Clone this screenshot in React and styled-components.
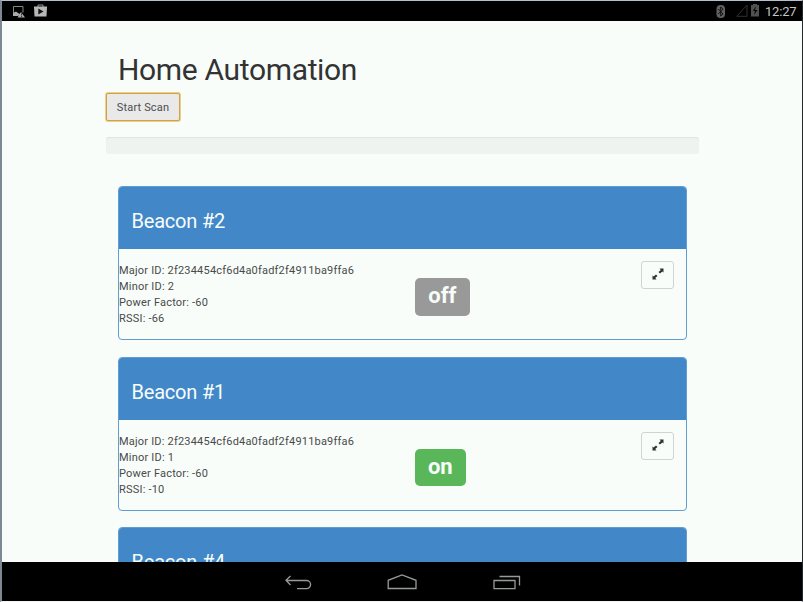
import React from "react";
import styled, { createGlobalStyle } from "styled-components";

const GlobalStyle = createGlobalStyle`
  * { box-sizing: border-box; }
  body { margin: 0; overflow: hidden; background: #f8fdfa; }
`;

const Device = styled.div`
  width: 803px;
  height: 602px;
  display: flex;
  flex-direction: column;
  overflow: hidden;
  border-style: solid;
  border-width: 1px 1px 1px 2px;
  border-color: #b4c0d2 #24282b #f4f4f4 #7e8892;
  background: #f8fdfa;
  color: #333;
  font-family: Roboto, sans-serif;
`;

const StatusBar = styled.header`
  flex: none;
  height: 20px;
  display: flex;
  justify-content: space-between;
  background: #000;
`;

const StatusGroup = styled.div`
  display: flex;
  padding: ${(p) => p.$pad};
`;

const Clock = styled.time`
  margin-left: 5px;
  width: 33px;
  font-size: 13px;
  line-height: 21px;
  letter-spacing: -0.2px;
  color: #c4c6c6;
  white-space: nowrap;
`;

const Icon = styled.svg`
  display: block;
  flex: none;
  margin-left: ${(p) => p.$gap || 0}px;
`;

const Screen = styled.main`
  flex: 1;
  min-height: 0;
  overflow: hidden;
  padding: 31px 0 0 104px;
`;

const Title = styled.h1`
  margin: 0 0 0 12px;
  font-size: 30px;
  font-weight: 400;
  line-height: 36px;
  letter-spacing: -0.34px;
`;

const ScanButton = styled.button`
  display: block;
  width: 74px;
  height: 28px;
  margin-top: 5px;
  padding: 1px 0 0;
  border: 1px solid #cfa246;
  border-radius: 2px;
  box-shadow: 0 0 0 1px #f0cd8b;
  background: #e9e9e9;
  color: #4c4c4c;
  font: 11px/25px Roboto, sans-serif;
  letter-spacing: 0.15px;
`;

const Progress = styled.div`
  width: 593px;
  height: 17px;
  margin-top: 16px;
  border-radius: 3px;
  background: #eef3f0;
  box-shadow: inset 0 1px 1px #dfe4e1;
`;

const List = styled.div`
  width: 569px;
  margin: 32px 0 0 12px;
`;

const Panel = styled.section`
  height: 154.4px;
  margin-bottom: 16.2px;
  border: 1px solid #5f9dd3;
  border-radius: 4px;
  overflow: hidden;
`;

const PanelHeading = styled.h2`
  height: 62px;
  margin: 0;
  padding: 4px 0 0 12.5px;
  background: #4288c8;
  color: #f8fdfa;
  font-size: 20px;
  font-weight: 400;
  line-height: 60px;
  letter-spacing: -0.2px;
`;

const PanelBody = styled.div`
  display: grid;
  grid-template-columns: 296px 1fr 33px;
  padding: 12px 12px 0 0;
  align-items: start;
`;

const Details = styled.div`
  font-size: 11px;
  line-height: 16.15px;
  letter-spacing: 0.2px;
  padding-top: 2px;
  color: #4a4a4a;
  white-space: nowrap;
`;

const State = styled.strong`
  justify-self: start;
  width: ${(p) => (p.$on ? 50.5 : 54.5)}px;
  height: 37.5px;
  margin-top: 17.4px;
  border-radius: 5px;
  background: ${(p) => (p.$on ? "#59b75a" : "#999")};
  color: #f8fdfa;
  font-size: 22px;
  font-weight: 700;
  line-height: 36px;
  letter-spacing: -0.1px;
  text-align: center;
`;

const ExpandButton = styled.button`
  width: 33px;
  height: 28px;
  padding: 0 0 2px;
  display: flex;
  align-items: center;
  justify-content: center;
  border: 1px solid #d0d3d1;
  border-radius: 3px;
  background: #f8fdfa;
`;

const NavBar = styled.nav`
  flex: none;
  height: 39px;
  display: flex;
  padding: 12px 0 0 282px;
  background: #000;
`;

function ScreenshotIcon() {
  return (
    <Icon width="13" height="14" viewBox="0 0 13 14">
      <path d="M1.5 10.5V2.5h9.5v6" fill="none" stroke="#858787" />
      <path d="M1 12V9l3-1.5 2 1.5 2 1-2 2zM9 8l4 5.5H5.5z" fill="#aaa" />
      <path d="M9.5 9.5v2M9.5 12v1" stroke="#333" />
    </Icon>
  );
}

function StoreIcon() {
  return (
    <Icon $gap={3} width="13" height="14" viewBox="0 0 13 14">
      <path d="M4 3V1h5v2" fill="none" stroke="#949696" />
      <path d="M0 2.5h13l-.5 10h-12z" fill="#b7b9b9" />
      <path d="M4.3 4.5v6L9.5 7.5z" fill="#111" />
    </Icon>
  );
}

function BluetoothIcon() {
  return (
    <Icon width="10" height="14" viewBox="0 0 10 14">
      <rect x=".5" y="1" width="8.5" height="13" rx="4" fill="#606262" />
      <path d="M2.3 5l4.7 5L4.7 12V3L7 5.2 2.3 10" fill="none" stroke="#111" />
    </Icon>
  );
}

function SignalIcon() {
  return (
    <Icon $gap={10} width="12" height="14" viewBox="0 0 12 14">
      <path d="M.8 12.3H11V1z" fill="none" stroke="#303232" />
    </Icon>
  );
}

function BatteryIcon() {
  return (
    <Icon $gap={2} width="10" height="14" viewBox="0 0 10 14">
      <path d="M3 0h4v1h2v11.5H1V1h2z" fill="#505252" />
      <path d="M6 2L3 7h2l-1 4 3.5-5H5z" fill="#050505" />
    </Icon>
  );
}

function ExpandIcon() {
  return (
    <Icon width="12" height="12" viewBox="0 0 12 12">
      <path
        d="M7.5 0.5h4v4L10.3 3.4 8 5.6 6.5 4.1 8.8 1.9zM4.5 11.5h-4v-4L1.7 8.6 4 6.4 5.5 7.9 3.2 10.1z"
        fill="#303332"
      />
    </Icon>
  );
}

const beacons = [
  { name: "Beacon #2", major: "2f234454cf6d4a0fadf2f4911ba9ffa6", minor: 2, power: -60, rssi: -66, on: false },
  { name: "Beacon #1", major: "2f234454cf6d4a0fadf2f4911ba9ffa6", minor: 1, power: -60, rssi: -10, on: true },
  { name: "Beacon #4" },
];

function Beacon({ data }) {
  return (
    <Panel>
      <PanelHeading>{data.name}</PanelHeading>
      {data.major && (
        <PanelBody>
          <Details>
            <div>Major ID: {data.major}</div>
            <div>Minor ID: {data.minor}</div>
            <div>Power Factor: {data.power}</div>
            <div>RSSI: {data.rssi}</div>
          </Details>
          <State $on={data.on}>{data.on ? "on" : "off"}</State>
          <ExpandButton aria-label="Expand">
            <ExpandIcon />
          </ExpandButton>
        </PanelBody>
      )}
    </Panel>
  );
}

export default function App() {
  return (
    <Device>
      <GlobalStyle />
      <StatusBar>
        <StatusGroup $pad="3px 0 0 10px">
          <ScreenshotIcon />
          <Icon width="6" height="1" />
          <StoreIcon />
        </StatusGroup>
        <StatusGroup $pad="0 4px 0 0">
          <StatusGroup $pad="3px 0 0 0">
            <BluetoothIcon />
            <SignalIcon />
            <BatteryIcon />
          </StatusGroup>
          <Clock>12:27</Clock>
        </StatusGroup>
      </StatusBar>
      <Screen>
        <Title>Home Automation</Title>
        <ScanButton>Start Scan</ScanButton>
        <Progress />
        <List>
          {beacons.map((b) => (
            <Beacon key={b.name} data={b} />
          ))}
        </List>
      </Screen>
      <NavBar>
        <Icon width="28" height="16" viewBox="0 0 28 16" fill="none" stroke="#989a9a" strokeWidth="1.3">
          <path d="M6.5 2L2 6.3 6.5 11M2 6.5h20.5a4.1 4.1 0 010 8.2H13" />
        </Icon>
        <Icon $gap={74} width="32" height="16" viewBox="0 0 32 16" fill="none" stroke="#989a9a" strokeWidth="1.3">
          <path d="M2.2 14.5V6.3L16 1l14 5.3v8.2z" />
        </Icon>
        <Icon $gap={74} width="30" height="16" viewBox="0 0 30 16" fill="none" stroke="#989a9a" strokeWidth="1.3">
          <path d="M2 6.5h21v8.2H2zM7.5 2.5h20v9" />
        </Icon>
      </NavBar>
    </Device>
  );
}
